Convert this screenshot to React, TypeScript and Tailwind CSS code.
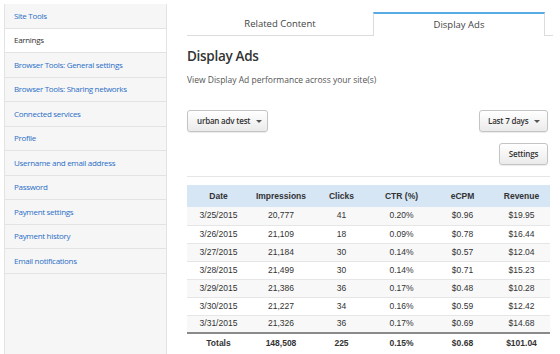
const sideItems = [
  'Site Tools',
  'Earnings',
  'Browser Tools: General settings',
  'Browser Tools: Sharing networks',
  'Connected services',
  'Profile',
  'Username and email address',
  'Password',
  'Payment settings',
  'Payment history',
  'Email notifications',
]

const rows = [
  ['3/25/2015', '20,777', '41', '0.20%', '$0.96', '$19.95'],
  ['3/26/2015', '21,109', '18', '0.09%', '$0.78', '$16.44'],
  ['3/27/2015', '21,184', '30', '0.14%', '$0.57', '$12.04'],
  ['3/28/2015', '21,499', '30', '0.14%', '$0.71', '$15.23'],
  ['3/29/2015', '21,386', '36', '0.17%', '$0.48', '$10.28'],
  ['3/30/2015', '21,227', '34', '0.16%', '$0.59', '$12.42'],
  ['3/31/2015', '21,326', '36', '0.17%', '$0.69', '$14.68'],
]

const headers = ['Date', 'Impressions', 'Clicks', 'CTR (%)', 'eCPM', 'Revenue']
const totals = ['Totals', '148,508', '225', '0.15%', '$0.68', '$101.04']
const colWidths = ['w-[63px]', 'w-[62px]', 'w-[59px]', 'w-[61px]', 'w-[61px]', 'w-[57px]']

const Caret = () => (
  <span className="ml-[6px] inline-block border-x-[3px] border-t-[3px] border-x-transparent border-t-[#555]" />
)

const btn =
  'flex h-[22px] items-center rounded-[3px] border border-[#c4c4c4] bg-gradient-to-b from-white to-[#ebebeb] text-[8px] font-semibold tracking-[-0.2px] text-[#333] shadow-[0_1px_1px_rgba(0,0,0,0.08)]'

export default function App() {
  return (
    <div className="flex h-[354px] w-[560px] overflow-hidden bg-white font-['Open_Sans',sans-serif]">
      <div className="ml-[4px] mt-[4px] flex w-[163px] flex-col border-x border-[#e3e3e3] bg-[#f6f6f6]">
        {sideItems.map((item) => (
          <div
            key={item}
            className={
              item === 'Earnings'
                ? 'flex h-[24.5px] items-center border-b border-[#e3e3e3] bg-white pl-[9px] text-[8px] tracking-[-0.3px] text-[#333]'
                : 'flex h-[24.5px] items-center border-b border-[#e3e3e3] pl-[9px] text-[8px] tracking-[-0.3px] text-[#2a6ec6]'
            }
          >
            {item}
          </div>
        ))}
      </div>

      <div className="pl-[20px] pt-[12px]">
        <div className="flex h-[24px] w-[366px]">
          <div className="flex w-[186px] items-center justify-center border-b border-[#dcdcdc] pt-[1px] text-[9.5px] text-[#444]">
            Related Content
          </div>
          <div className="flex w-[172px] items-center justify-center border-x border-t-2 border-x-[#dcdcdc] border-t-[#5aaae6] bg-white text-[9.5px] text-[#444]">
            Display Ads
          </div>
          <div className="flex-1 border-b border-[#dcdcdc]" />
        </div>

        <div className="w-[363px]">
          <h1 className="mt-[10px] text-[13.5px] leading-[20px] font-semibold tracking-[-0.3px] text-[#333]">
            Display Ads
          </h1>
          <p className="mt-[8px] text-[8.5px] leading-[12px] text-[#555]">
            View Display Ad performance across your site(s)
          </p>

          <div className="mt-[24px] flex justify-between">
            <button className={`${btn} w-[81px] pl-[9px]`}>
              urban adv test
              <Caret />
            </button>
            <button className={`${btn} mr-[2px] w-[69px] pl-[8px]`}>
              Last 7 days
              <Caret />
            </button>
          </div>

          <div className="mt-[11px] flex justify-end">
            <button className={`${btn} mr-[2px] h-[21px] w-[49px] justify-center font-bold`}>Settings</button>
          </div>

          <div className="mt-[11px] border-t border-[#e6e6e6]" />

          <table className="mt-[8px] w-[363px] table-fixed border-collapse font-['Liberation_Sans',Arial,sans-serif] text-[8.5px] text-[#333]">
            <thead>
              <tr className="h-[22px] bg-[#d6e6f5]">
                {headers.map((h, i) => (
                  <th key={h} className={`${colWidths[i]} text-center font-bold`}>
                    {h}
                  </th>
                ))}
              </tr>
            </thead>
            <tbody>
              {rows.map((r, ri) => (
                <tr
                  key={r[0]}
                  className={
                    ri === rows.length - 1
                      ? 'h-[18px] bg-[#f8f8f8]'
                      : ri % 2 === 0
                        ? 'h-[18px] border-b border-[#e6e6e6] bg-[#f8f8f8]'
                        : 'h-[18px] border-b border-[#e6e6e6] bg-white'
                  }
                >
                  {r.map((c, ci) => (
                    <td key={ci} className="text-center">
                      {c}
                    </td>
                  ))}
                </tr>
              ))}
              <tr className="h-[19px] border-t-2 border-[#8a8a8a]">
                {totals.map((c, ci) => (
                  <td key={ci} className="text-center font-bold">
                    {c}
                  </td>
                ))}
              </tr>
            </tbody>
          </table>
        </div>
      </div>
    </div>
  )
}
